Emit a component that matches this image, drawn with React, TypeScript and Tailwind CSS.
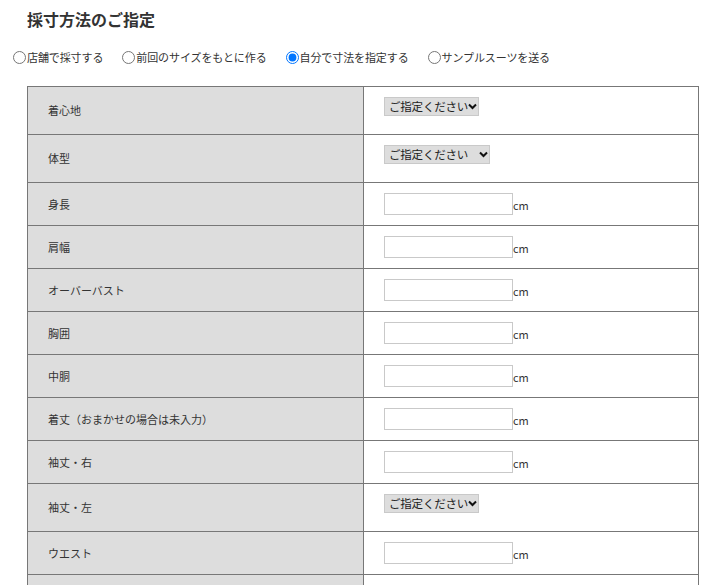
import React from "react";

type Row = { label: string; kind: "select" | "input" | "empty"; w?: number };

const rows: Row[] = [
  { label: "着心地", kind: "select", w: 95 },
  { label: "体型", kind: "select", w: 106 },
  { label: "身長", kind: "input" },
  { label: "肩幅", kind: "input" },
  { label: "オーバーバスト", kind: "input" },
  { label: "胸囲", kind: "input" },
  { label: "中胴", kind: "input" },
  { label: "着丈（おまかせの場合は未入力）", kind: "input" },
  { label: "袖丈・右", kind: "input" },
  { label: "袖丈・左", kind: "select", w: 95 },
  { label: "ウエスト", kind: "input" },
  { label: "", kind: "empty" },
];

const font = { fontFamily: '"Noto Sans CJK JP", "Noto Sans", sans-serif' };

function FakeSelect({ w }: { w: number }) {
  return (
    <div
      className="flex h-[19px] items-center justify-between whitespace-nowrap border border-[#c9c9c9] bg-[#dddddd] pl-[4px] pr-[1px] text-[11.5px] leading-none text-[#222]"
      style={{ width: w }}
    >
      <span className="tracking-[-0.2px]">ご指定ください</span>
      <svg width="9" height="7" viewBox="0 0 9 7" className="shrink-0">
        <path d="M1 1.5 L4.5 5 L8 1.5" fill="none" stroke="#111" strokeWidth="2" />
      </svg>
    </div>
  );
}

export default function App() {
  const radios = [
    { label: "店舗で採寸する", checked: false },
    { label: "前回のサイズをもとに作る", checked: false },
    { label: "自分で寸法を指定する", checked: true },
    { label: "サンプルスーツを送る", checked: false },
  ];
  return (
    <div className="bg-white text-[#333]" style={font}>
      <h2 className="pl-[27px] pt-[7px] text-[16px] font-bold leading-[24px] text-[#333]">
        採寸方法のご指定
      </h2>
      <div className="mt-[18px] flex items-center pl-[13px] text-[11px] leading-[16px] text-[#333]">
        {radios.map((r, i) => (
          <label key={i} className="mr-[19px] flex items-center">
            <input
              type="radio"
              name="m"
              defaultChecked={r.checked}
              className="m-0 h-[13px] w-[13px]"
            />
            <span className="ml-[1px] tracking-[-0.1px]">{r.label}</span>
          </label>
        ))}
      </div>
      <div className="ml-[27px] mt-[21px] w-[672px] border-x border-t border-[#777]">
        {rows.map((r, i) => (
          <div
            key={i}
            className={`flex border-b border-[#777] ${r.kind === "select" ? "h-[48px]" : "h-[43px]"}`}
          >
            <div className="flex w-[336px] shrink-0 items-center border-r border-[#777] bg-[#dddddd] pl-[20px] text-[11px] text-[#333]">
              {r.label}
            </div>
            <div className="flex flex-1 items-start pl-[20px] pt-[10px]">
              {r.kind === "select" ? (
                <FakeSelect w={r.w ?? 95} />
              ) : r.kind === "input" ? (
                <div className="flex items-center">
                  <input
                    type="text"
                    className="h-[22px] w-[129px] border border-[#c9c9c9] bg-white outline-none"
                  />
                  <span className="mt-[2px] text-[11px] text-[#333]">cm</span>
                </div>
              ) : null}
            </div>
          </div>
        ))}
      </div>
    </div>
  );
}
